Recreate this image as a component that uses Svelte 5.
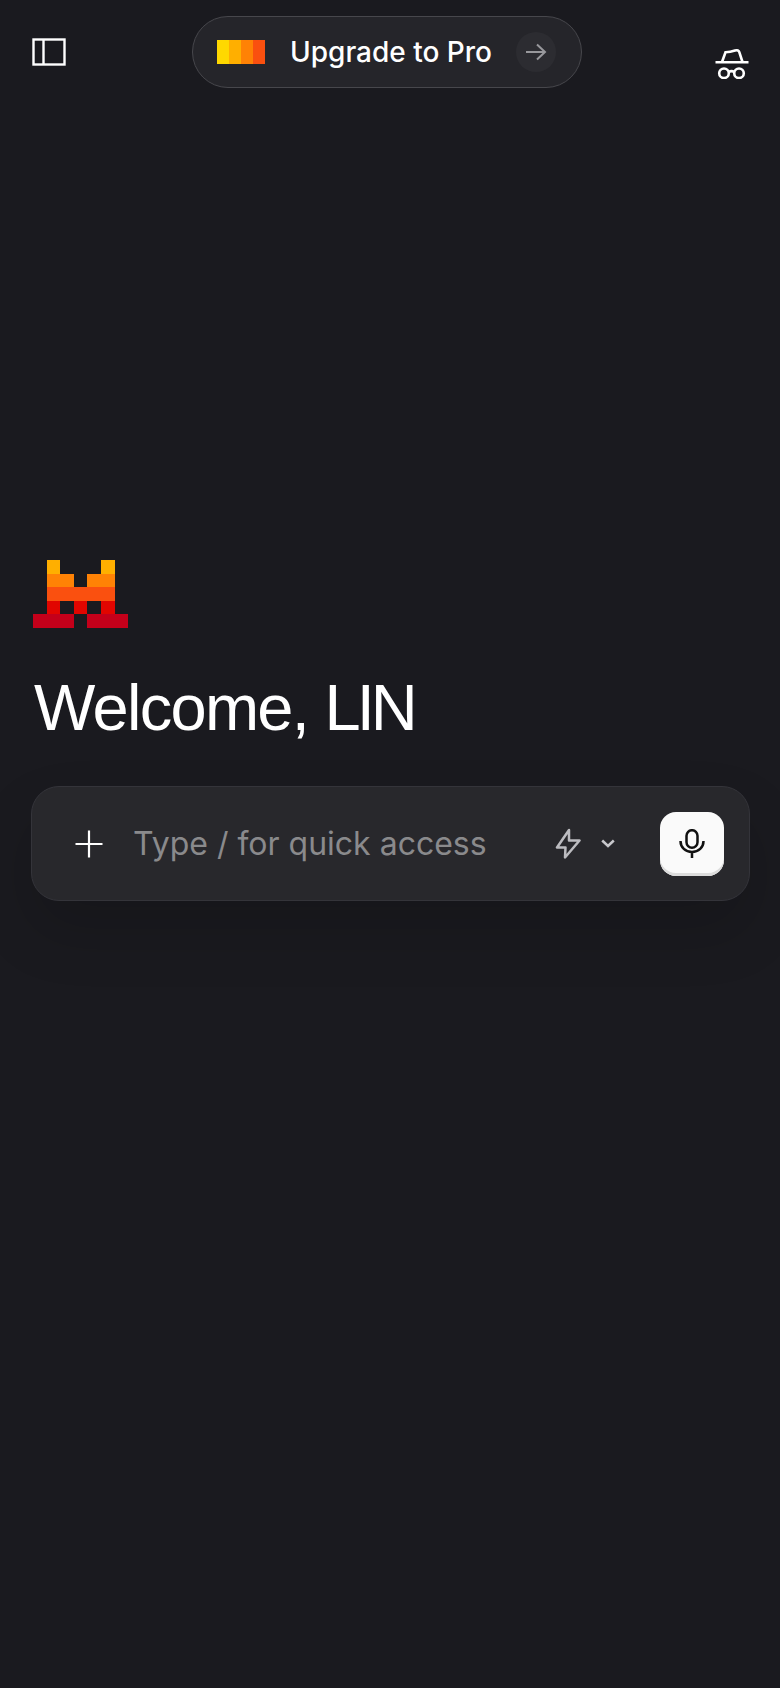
<script>
	const logo = [
		{ x: 14, y: 0, w: 13, h: 14, fill: '#ffaf00' },
		{ x: 68, y: 0, w: 14, h: 14, fill: '#ffaf00' },
		{ x: 14, y: 14, w: 27, h: 13, fill: '#ff8205' },
		{ x: 54, y: 14, w: 28, h: 13, fill: '#ff8205' },
		{ x: 14, y: 27, w: 68, h: 14, fill: '#fa500f' },
		{ x: 14, y: 41, w: 13, h: 13, fill: '#e10500' },
		{ x: 41, y: 41, w: 13, h: 13, fill: '#e10500' },
		{ x: 68, y: 41, w: 14, h: 13, fill: '#e10500' },
		{ x: 0, y: 54, w: 41, h: 14, fill: '#c4001a' },
		{ x: 54, y: 54, w: 41, h: 14, fill: '#c4001a' }
	]
	const stripes = ['#ffd800', '#ffaf00', '#ff8205', '#fa500f']
	let name = 'LIN'
</script>

<div class="page">
	<header>
		<button class="icon-btn" aria-label="Sidebar">
			<svg width="34" height="28" viewBox="0 0 34 28" fill="none" stroke="#fff" stroke-width="2.4">
				<rect x="1.5" y="1.5" width="31" height="25" />
				<path d="M11.5 1.5v25" />
			</svg>
		</button>

		<button class="upgrade">
			<span class="stripes">
				{#each stripes as color}
					<i style="background:{color}"></i>
				{/each}
			</span>
			<span class="upgrade-label">Upgrade to Pro</span>
			<span class="arrow">
				<svg width="22" height="18" viewBox="0 0 22 18" fill="none" stroke="#98989c" stroke-width="2">
					<path d="M1 9h19M12 1.500 20 9l-8 7.500" />
				</svg>
			</span>
		</button>

		<button class="icon-btn incognito" aria-label="Incognito">
			<svg width="34" height="30" viewBox="0 0 34 30" fill="none" stroke="#fff" stroke-width="2.600">
				<path d="M.5 13.300h33" />
				<path d="M7 13 10.500 3.200c3.500 0 6.500-.6 9.500-1.600 2.500-.8 3.800 0 4.300 1.600L27.500 13" />
				<circle cx="9" cy="24.300" r="4.800" />
				<circle cx="24" cy="24.300" r="4.800" />
				<path d="M13.500 23c2-1.200 4-1.200 6 0" />
			</svg>
		</button>
	</header>

	<main>
		<svg class="logo" width="95" height="68" viewBox="0 0 95 68">
			{#each logo as b}
				<rect x={b.x} y={b.y} width={b.w} height={b.h} fill={b.fill} />
			{/each}
		</svg>

		<h1>Welcome, <span class="name">{name}</span></h1>

		<div class="composer">
			<button class="plus" aria-label="Add">
				<svg width="28" height="28" viewBox="0 0 28 28" stroke="#fff" stroke-width="2.200">
					<path d="M14 .5v27M.5 14h27" />
				</svg>
			</button>
			<span class="placeholder">Type / for quick access</span>
			<button class="mode" aria-label="Mode">
				<svg width="26" height="31" viewBox="0 0 26 31" fill="none" stroke="#bcbcc0" stroke-width="2.500" stroke-linejoin="round">
					<path d="M14 2 2 19.500h8.500L10 29.500 24.500 12.500H14z" />
				</svg>
				<svg width="14" height="9" viewBox="0 0 14 9" fill="none" stroke="#c8c8cc" stroke-width="2.500">
					<path d="M1.200 1.500 7 7l5.800-5.500" />
				</svg>
			</button>
			<button class="mic" aria-label="Voice">
				<svg width="26" height="30" viewBox="0 0 26 30" fill="none" stroke="#111" stroke-width="2.500">
					<rect x="7.500" y="1.200" width="11" height="17.500" rx="5.500" />
					<path d="M1.500 12c0 6.500 5 11 11.500 11s11.500-4.500 11.500-11M13 23v6" />
				</svg>
			</button>
		</div>
	</main>
</div>

<style>
	:global(body) {
		margin: 0;
		background: #1a1a1f;
	}
	.page {
		height: 1688px;
		background: #1a1a1f;
		color: #fff;
		font-family: Inter, "Liberation Sans", sans-serif;
		overflow: hidden;
	}
	button {
		background: none;
		border: 0;
		padding: 0;
		display: flex;
		align-items: center;
		font: inherit;
		color: inherit;
	}
	header {
		display: flex;
		justify-content: space-between;
		align-items: flex-start;
		padding: 16px 31px 0 32px;
	}
	.icon-btn {
		margin-top: 22px;
	}
	.incognito {
		margin-top: 33px;
	}
	.upgrade {
		width: 390px;
		height: 72px;
		box-sizing: border-box;
		margin-right: 7px;
		padding: 0 25px 0 24px;
		background: #25252a;
		border: 1px solid #47474c;
		border-radius: 36px;
	}
	.stripes {
		display: flex;
	}
	.stripes i {
		width: 12px;
		height: 24px;
	}
	.upgrade-label {
		margin-left: 25px;
		font-size: 28px;
		font-weight: 450;
		white-space: nowrap;
	}
	.arrow {
		margin-left: auto;
		width: 40px;
		height: 40px;
		border-radius: 50%;
		background: #2c2c31;
		display: flex;
		align-items: center;
		justify-content: center;
	}
	main {
		padding: 472px 30px 0 31px;
	}
	.logo {
		display: block;
		margin-left: 2px;
	}
	h1 {
		margin: 44px 0 0 3px;
		font-family: "Liberation Sans", Arial, sans-serif;
		font-weight: 400;
		font-size: 65px;
		line-height: 72px;
		letter-spacing: -1.7px;
		white-space: nowrap;
	}
	.name {
		letter-spacing: -4px;
	}
	.composer {
		margin-top: 42px;
		height: 115px;
		box-sizing: border-box;
		display: flex;
		align-items: center;
		padding: 0 25px 0 43px;
		background: #28282c;
		border: 1px solid #34343a;
		border-radius: 28px;
		box-shadow: 0 30px 60px rgba(0, 0, 0, 0.15);
	}
	.plus {
		flex: none;
	}
	.placeholder {
		margin-left: 30px;
		font-size: 32px;
		color: #8a8a8c;
		white-space: nowrap;
	}
	.mode {
		margin-left: auto;
		gap: 20px;
	}
	.mic {
		margin-left: 45px;
		width: 64px;
		height: 64px;
		justify-content: center;
		background: #fafafa;
		border-radius: 16px;
		box-shadow: inset 0 -3px 0 #dcdcdc;
	}
</style>
